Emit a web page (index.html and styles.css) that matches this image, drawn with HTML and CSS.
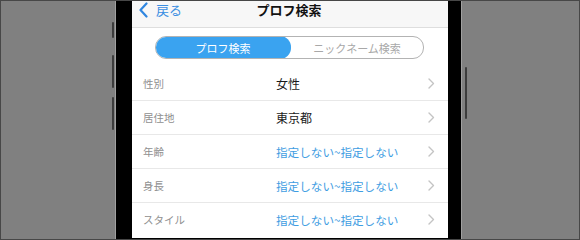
FILE: index.html
```html
<!DOCTYPE html>
<html lang="ja">
<head>
<meta charset="utf-8">
<title>プロフ検索</title>
<link rel="stylesheet" href="styles.css">
</head>
<body>
<div class="frame">
  <div class="side side-left">
    <span class="btn btn-l1"></span>
    <span class="btn btn-l2"></span>
    <span class="btn btn-l3"></span>
  </div>
  <div class="phone">
    <div class="screen">
      <div class="nav">
        <div class="back">
          <svg class="chev-back" width="11" height="16" viewBox="0 0 11 16"><path d="M8.5 1.5 L2.5 8 L8.5 14.5" fill="none" stroke="#2f86e0" stroke-width="2.2" stroke-linecap="round" stroke-linejoin="round"/></svg>
          <span class="back-text">戻る</span>
        </div>
        <div class="title">プロフ検索</div>
        <div class="nav-spacer"></div>
      </div>
      <div class="seg-wrap">
        <div class="seg">
          <div class="seg-item active">プロフ検索</div>
          <div class="seg-item">ニックネーム検索</div>
        </div>
      </div>
      <div class="list">
        <div class="row"><span class="label">性別</span><span class="value">女性</span><svg class="chev" width="7" height="11" viewBox="0 0 7 11"><path d="M1 1 L5.5 5.5 L1 10" fill="none" stroke="#c4c4c4" stroke-width="1.4" stroke-linecap="round" stroke-linejoin="round"/></svg></div>
        <div class="row"><span class="label">居住地</span><span class="value">東京都</span><svg class="chev" width="7" height="11" viewBox="0 0 7 11"><path d="M1 1 L5.5 5.5 L1 10" fill="none" stroke="#c4c4c4" stroke-width="1.4" stroke-linecap="round" stroke-linejoin="round"/></svg></div>
        <div class="row"><span class="label">年齢</span><span class="value blue">指定しない~指定しない</span><svg class="chev" width="7" height="11" viewBox="0 0 7 11"><path d="M1 1 L5.5 5.5 L1 10" fill="none" stroke="#c4c4c4" stroke-width="1.4" stroke-linecap="round" stroke-linejoin="round"/></svg></div>
        <div class="row"><span class="label">身長</span><span class="value blue">指定しない~指定しない</span><svg class="chev" width="7" height="11" viewBox="0 0 7 11"><path d="M1 1 L5.5 5.5 L1 10" fill="none" stroke="#c4c4c4" stroke-width="1.4" stroke-linecap="round" stroke-linejoin="round"/></svg></div>
        <div class="row last"><span class="label">スタイル</span><span class="value blue">指定しない~指定しない</span><svg class="chev" width="7" height="11" viewBox="0 0 7 11"><path d="M1 1 L5.5 5.5 L1 10" fill="none" stroke="#c4c4c4" stroke-width="1.4" stroke-linecap="round" stroke-linejoin="round"/></svg></div>
      </div>
    </div>
  </div>
  <div class="side side-right">
    <span class="btn btn-r1"></span>
  </div>
</div>
</body>
</html>
```

FILE: styles.css
```css
html, body {
  margin: 0;
  padding: 0;
}
body {
  width: 580px;
  height: 240px;
  overflow: hidden;
  font-family: "Noto Sans CJK JP", "Noto Sans", sans-serif;
}
.frame {
  width: 580px;
  height: 240px;
  box-sizing: border-box;
  border: 1px solid #474747;
  background: #808080;
  display: flex;
}
.side {
  position: relative;
  flex: none;
}
.side-left {
  width: 114px;
}
.side-right {
  flex: 1;
}
.btn {
  position: absolute;
  width: 2px;
  background: #3c3c3c;
  border-radius: 1px;
}
.btn-l1 { left: 111px; top: 21px; height: 16px; }
.btn-l2 { left: 111px; top: 54px; height: 33px; }
.btn-l3 { left: 111px; top: 96px; height: 33px; }
.btn-r1 { left: 3px; top: 66px; height: 52px; }
.phone {
  flex: none;
  width: 316px;
  background: #000;
  border-left: 1px solid #a0a0a0;
  border-right: 1px solid #a0a0a0;
  padding: 0 13px 1px 16px;
  display: flex;
}
.screen {
  width: 316px;
  background: #fff;
  display: flex;
  flex-direction: column;
}
.nav {
  height: 26px;
  background: #f7f7f7;
  border-bottom: 1px solid #dedede;
  display: flex;
  align-items: flex-start;
  padding: 0 8px 0 6px;
}
.back {
  width: 90px;
  display: flex;
  align-items: center;
  height: 17px;
}
.chev-back {
  display: block;
}
.back-text {
  margin-left: 7px;
  font-size: 13px;
  line-height: 17px;
  color: #3a8ee2;
}
.title {
  flex: 1;
  text-align: center;
  font-size: 13px;
  font-weight: bold;
  line-height: 17px;
  color: #111;
}
.nav-spacer {
  width: 90px;
}
.seg-wrap {
  height: 39px;
  display: flex;
  align-items: center;
  justify-content: center;
}
.seg {
  width: 269px;
  height: 23px;
  box-sizing: border-box;
  border: 1px solid #b3b3b3;
  border-radius: 11px;
  display: flex;
  overflow: hidden;
  margin-left: -1px;
}
.seg-item {
  flex: 1;
  display: flex;
  align-items: center;
  justify-content: center;
  font-size: 11px;
  color: #a8a8a8;
}
.seg-item.active {
  background: #3aa3f0;
  color: #fff;
  margin: -1px 0 -1px -1px;
  border-radius: 11px;
  flex: none;
  width: 136px;
}
.list {
  display: flex;
  flex-direction: column;
}
.row {
  height: 33px;
  border-bottom: 1px solid #e8e8e8;
  display: flex;
  align-items: center;
  padding: 0 13px 0 11px;
}
.row.last {
  border-bottom: none;
}
.label {
  width: 133px;
  font-size: 10.5px;
  color: #8f8f8f;
}
.value {
  flex: 1;
  font-size: 12px;
  color: #1a1a1a;
}
.value.blue {
  font-size: 11.6px;
  color: #3f9de2;
}
.chev {
  display: block;
}
```
